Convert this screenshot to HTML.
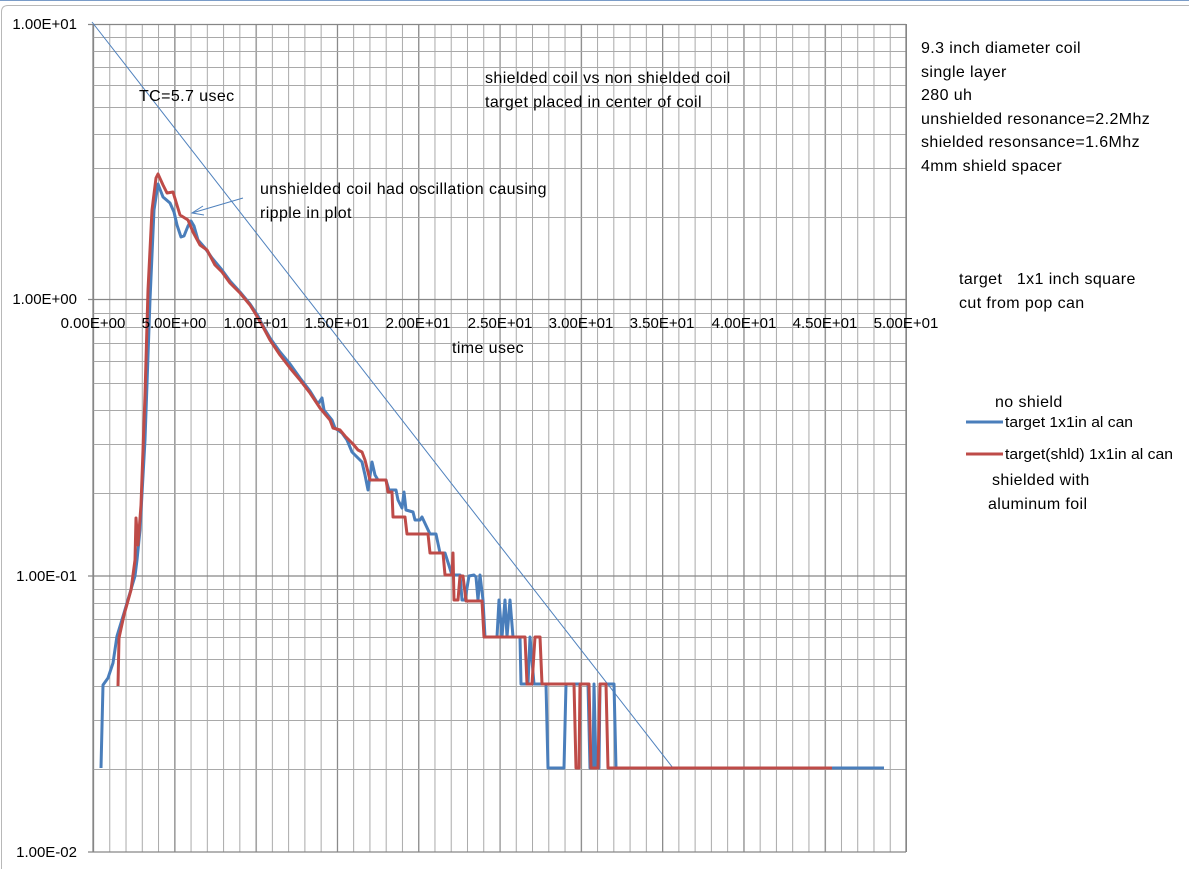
<!DOCTYPE html>
<html><head><meta charset="utf-8"><style>
html,body{margin:0;padding:0;background:#fff;}
body{width:1189px;height:869px;overflow:hidden;position:relative;font-family:"Liberation Sans",sans-serif;}
</style></head><body>
<svg width="1189" height="869" viewBox="0 0 1189 869" xmlns="http://www.w3.org/2000/svg" style="position:absolute;left:0;top:0">
<defs>
<pattern id="vmin" x="93" y="0" width="16.26" height="869" patternUnits="userSpaceOnUse"><line x1="0.5" y1="0" x2="0.5" y2="869" stroke="#a9a9a9" stroke-width="1"/></pattern>
<pattern id="vmaj" x="93" y="0" width="81.3" height="869" patternUnits="userSpaceOnUse"><line x1="0.5" y1="0" x2="0.5" y2="869" stroke="#868686" stroke-width="1.3"/></pattern>
</defs>
<line x1="0" y1="0.5" x2="1189" y2="0.5" stroke="#7a9cc8" stroke-width="1"/>
<path d="M1189 5.5 H8 Q1.5 5.5 1.5 12 V869" fill="none" stroke="#b8b8b8" stroke-width="1"/>
<rect x="93" y="24" width="814" height="828" fill="url(#vmin)"/>
<rect x="93" y="24" width="814" height="828" fill="url(#vmaj)"/>
<g stroke="#a9a9a9" stroke-width="1">
<path d="M93 217.5H906M93 168.5H906M93 134.5H906M93 107.5H906M93 85.5H906M93 67.5H906M93 51.5H906M93 37.5H906
M93 493.5H906M93 444.5H906M93 410.5H906M93 383.5H906M93 361.5H906M93 343.5H906M93 327.5H906M93 313.5H906
M93 769.5H906M93 720.5H906M93 686.5H906M93 659.5H906M93 637.5H906M93 619.5H906M93 603.5H906M93 589.5H906"/>
</g>
<g stroke="#868686" stroke-width="1.3">
<path d="M88 24.5H906M88 299.5H906M88 576H906M88 852H906M93 24V852M906 24V852"/>
</g>
<line x1="92" y1="22" x2="673" y2="768" stroke="#4f81bd" stroke-width="1"/>
<line x1="243" y1="198" x2="192" y2="213" stroke="#4f81bd" stroke-width="1"/>
<path d="M203 206 L192 213 L204 215" fill="none" stroke="#4f81bd" stroke-width="1"/>
<polyline fill="none" stroke="#4a7ebb" stroke-width="3" stroke-linejoin="round" points="101,768 103,685 108,678 113,663 117,636 124,613 135,576 137,560 140,530 145,440 150,300 154,210 158,184 163,197 170,203 174,212 177,225 181,237 184,236 188,226 191,221 194,226 198,240 205,248 212,258 222,270 230,281 240,292 250,304 258,316 262,324 270,338 280,352 290,364 300,378 310,391 318,404 322,398 324,410 332,420 335,428 342,433 347,440 352,452 358,458 362,462 365,475 368,490 372,462 375,475 378,480 386,480 389,490 396,490 398,500 402,508 404,492 406,510 413,512 415,520 420,520 422,517 430,534 436,534 440,553 445,553 452,575 460,575 462,600 465,600 469,576 474,575 476,577 478,600 480,575 483,600 485,637 497,637 499,600 502,637 505,600 507,637 510,600 513,637 520,637 521,684 528,684 530,637 534,684 542,684 546,684 548,768 564,768 566,684 588,684 590,768 593,768 594,684 596,768 599,768 600,684 613,684 614,684 616,768 884,768"/>
<polyline fill="none" stroke="#be4b48" stroke-width="3" stroke-linejoin="round" points="118,686 119,638 124,615 131,590 135,560 136,518 138,545 141,505 145,395 148,290 152,210 156,178 158,174 163,185 167,193 173,192 180,215 188,220 193,232 200,245 207,250 215,265 222,272 230,283 240,293 250,305 255,313 262,325 270,340 280,355 290,368 300,380 310,393 320,408 330,420 333,428 340,430 345,436 353,444 358,450 362,452 365,460 370,480 386,480 388,492 392,492 393,517 405,517 407,534 428,534 430,553 443,553 445,575 452,575 453,553 454,600 458,600 460,576 463,576 466,601 482,601 484,637 525,637 527,684 532,684 535,637 540,637 542,684 574,684 576,768 579,768 580,684 589,684 591,768 598,768 600,684 606,684 608,768 832,768"/>
<g font-family="Liberation Sans, sans-serif" font-size="15" fill="#000">
<text x="77" y="29" text-anchor="end">1.00E+01</text>
<text x="77" y="304" text-anchor="end">1.00E+00</text>
<text x="77" y="581" text-anchor="end">1.00E-01</text>
<text x="77" y="857" text-anchor="end">1.00E-02</text>
<g text-anchor="middle">
<text x="93" y="328">0.00E+00</text>
<text x="174" y="328">5.00E+00</text>
<text x="256" y="328">1.00E+01</text>
<text x="337" y="328">1.50E+01</text>
<text x="418" y="328">2.00E+01</text>
<text x="500" y="328">2.50E+01</text>
<text x="581" y="328">3.00E+01</text>
<text x="662" y="328">3.50E+01</text>
<text x="744" y="328">4.00E+01</text>
<text x="825" y="328">4.50E+01</text>
<text x="906" y="328">5.00E+01</text>
</g>
<g font-size="16" letter-spacing="0.4">
<text x="452" y="353">time usec</text>
<text x="139" y="101">TC=5.7 usec</text>
<text x="260" y="194">unshielded coil had oscillation causing</text>
<text x="260" y="218">ripple in plot</text>
<text x="485" y="83">shielded coil vs non shielded coil</text>
<text x="485" y="107">target placed in center of coil</text>
<text x="921" y="53">9.3 inch diameter coil</text>
<text x="921" y="77">single layer</text>
<text x="921" y="100">280 uh</text>
<text x="921" y="124">unshielded resonance=2.2Mhz</text>
<text x="921" y="147">shielded resonsance=1.6Mhz</text>
<text x="921" y="171">4mm shield spacer</text>
<text x="959" y="284">target&#160;&#160;&#160;1x1 inch square</text>
<text x="959" y="308">cut from pop can</text>
<text x="995" y="407">no shield</text>
<text x="992" y="485">shielded with</text>
<text x="988" y="509">aluminum foil</text>
</g>
<text x="1005" y="427" textLength="128" lengthAdjust="spacingAndGlyphs">target 1x1in al can</text>
<text x="1005" y="459" textLength="168" lengthAdjust="spacingAndGlyphs">target(shld) 1x1in al can</text>
</g>
<line x1="966" y1="422" x2="1003" y2="422" stroke="#4a7ebb" stroke-width="3"/>
<line x1="966" y1="454" x2="1003" y2="454" stroke="#be4b48" stroke-width="3"/>
</svg>
</body></html>
